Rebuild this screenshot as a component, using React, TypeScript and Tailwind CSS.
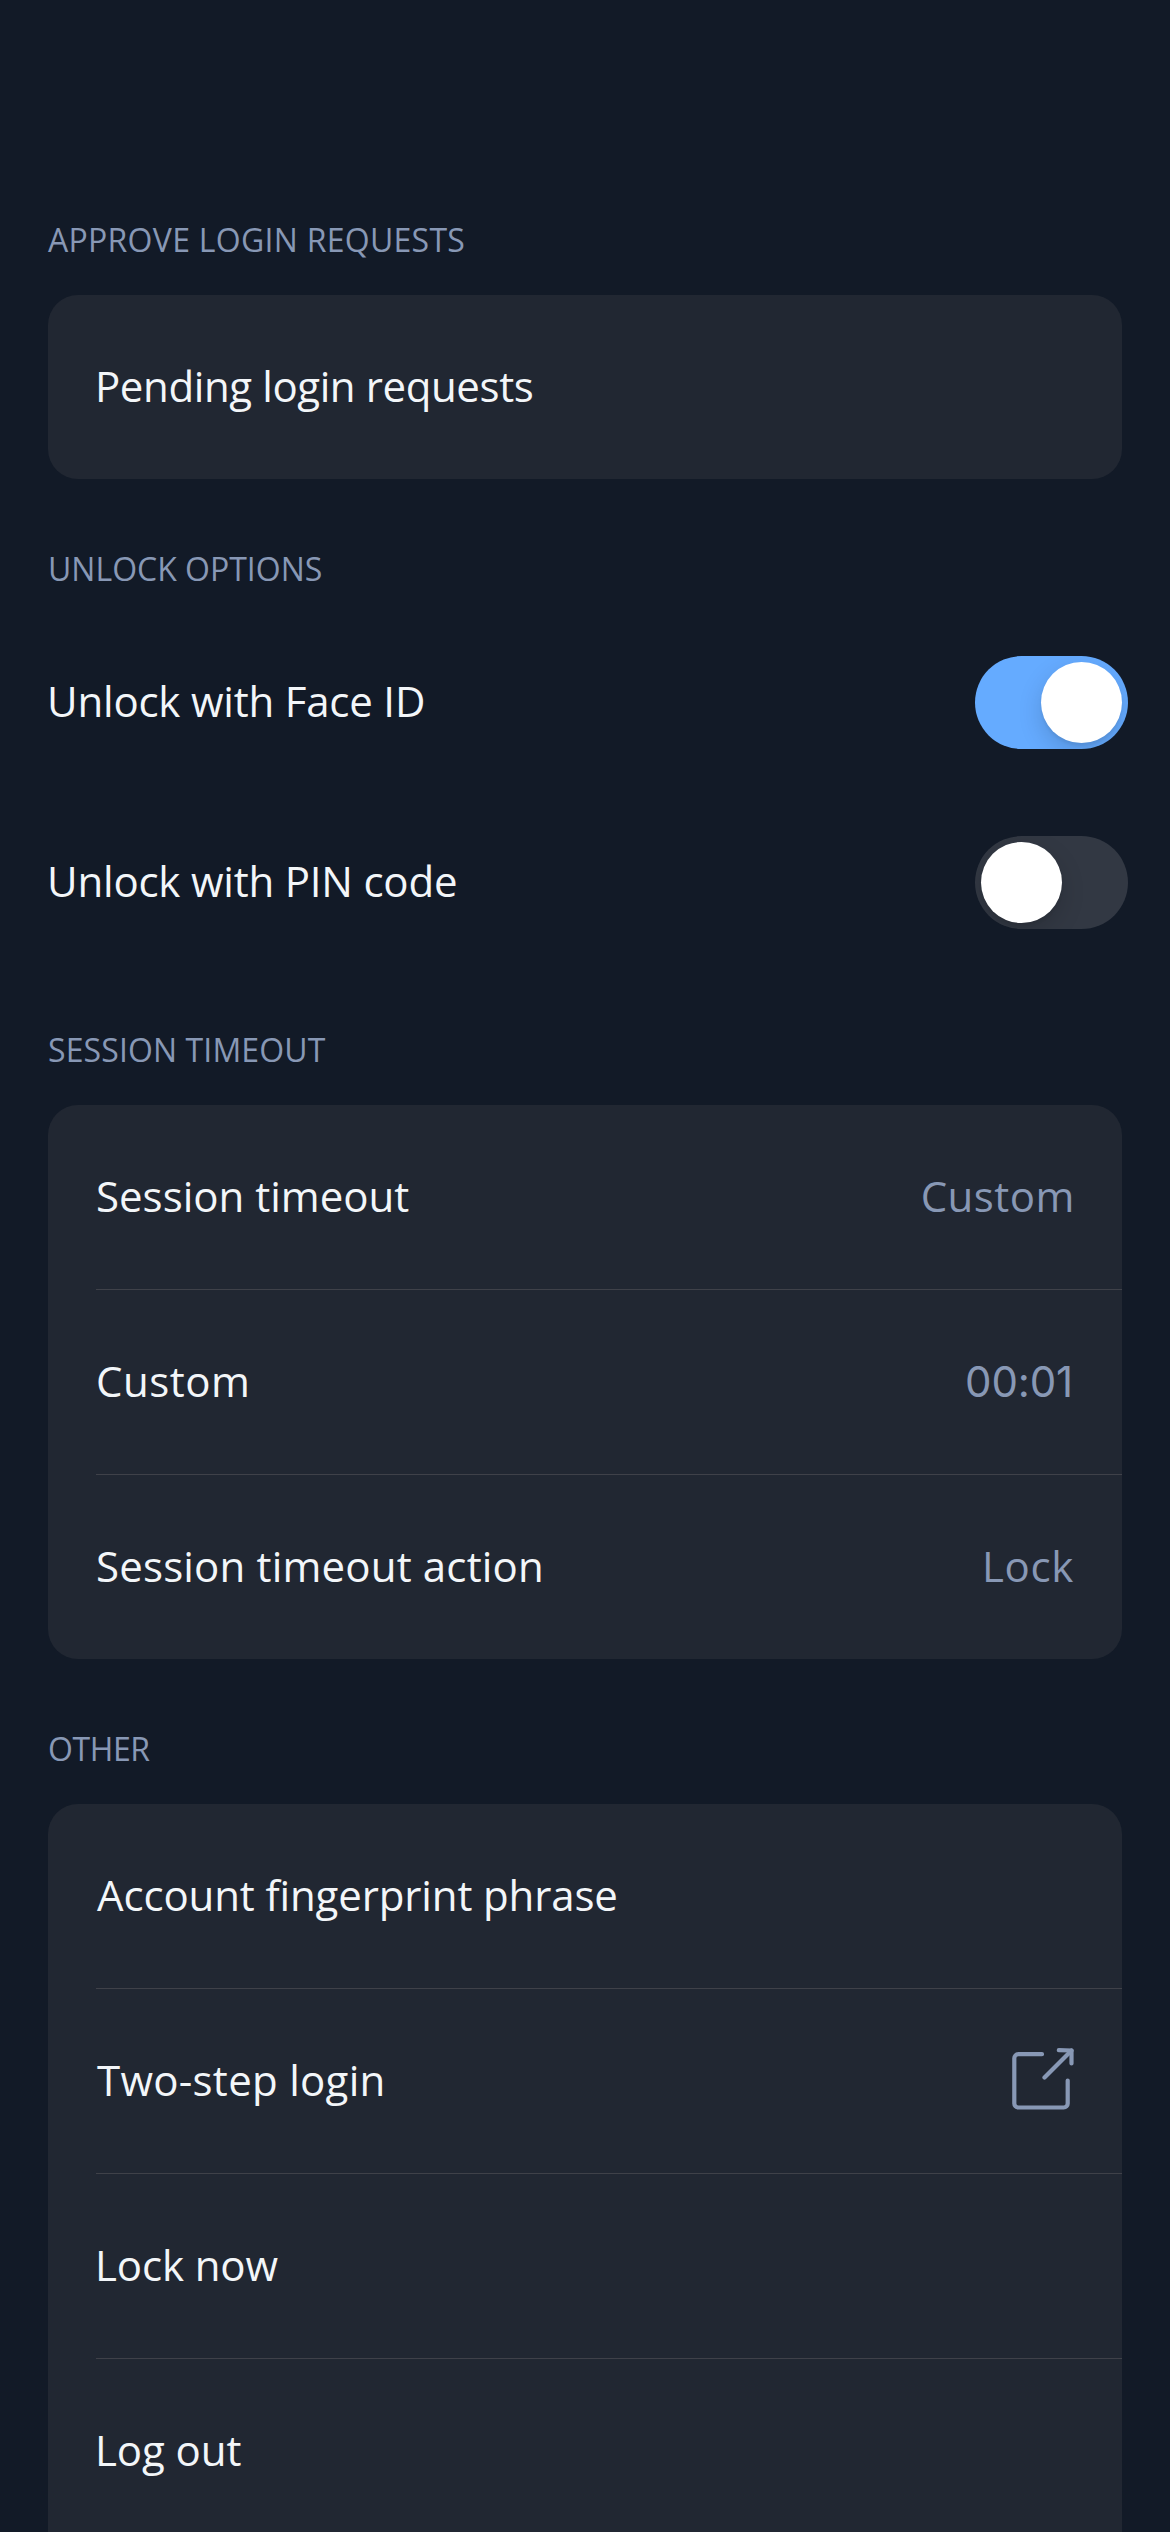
import React from 'react';
import clsx from 'clsx';

type RowData = {
  label: string;
  labelClass?: string;
  value?: string;
  valueClass?: string;
  external?: boolean;
};

const approveRows: RowData[] = [
  { label: 'Pending login requests', labelClass: 'tracking-[-0.4px] -ml-px' },
];

const sessionRows: RowData[] = [
  { label: 'Session timeout', value: 'Custom', valueClass: 'tracking-[0.5px] -mr-px' },
  { label: 'Custom', labelClass: 'tracking-[0.5px]', value: '00:01', valueClass: "font-['Inter'] tracking-[-0.15px] pt-[3px] mr-px" },
  { label: 'Session timeout action', labelClass: 'tracking-[0.17px]', value: 'Lock', valueClass: 'tracking-[0.66px]' },
];

const otherRows: RowData[] = [
  { label: 'Account fingerprint phrase', labelClass: 'tracking-[-0.13px] ml-px' },
  { label: 'Two-step login', labelClass: 'tracking-[0.28px] ml-px', external: true },
  { label: 'Lock now', labelClass: 'tracking-[-0.12px] -ml-px' },
  { label: 'Log out', labelClass: 'tracking-[-0.07px] -ml-px' },
];

function ExternalIcon() {
  return (
    <svg
      className="h-[68px] w-[63px]"
      viewBox="0 0 63 68"
      fill="none"
      stroke="#8898B5"
      strokeWidth="4.2"
      strokeLinecap="round"
      strokeLinejoin="round"
    >
      <path d="M31 7.2H7.3a4 4 0 0 0-4 4V56.5a4 4 0 0 0 4 4H52.7a4 4 0 0 0 4-4V33.5" />
      <path d="M33.5 30.5 60.5 3.5" />
      <path d="M47.8 3.2 60.5 3.5V16.5" />
    </svg>
  );
}

function Heading({ children, className }: { children: React.ReactNode; className?: string }) {
  return <h2 className={clsx('h-12 text-[32px] leading-[48px] text-[#8898B5]', className)}>{children}</h2>;
}

function Card({ rows, className }: { rows: RowData[]; className?: string }) {
  return (
    <div className={clsx('mt-[31px] mr-12 shrink-0 overflow-hidden bg-[#212732] pl-12', className)}>
      {rows.map((row, i) => (
        <div
          key={row.label}
          className={clsx(
            'flex items-center justify-between pr-12',
            i > 0 ? 'h-[185px] border-t border-[#3F4149]' : 'h-[184px]',
          )}
        >
          <span className={clsx('pb-[3px]', row.labelClass)}>{row.label}</span>
          {row.value && <span className={clsx('pb-[3px] text-[#8898B5]', row.valueClass)}>{row.value}</span>}
          {row.external && <ExternalIcon />}
        </div>
      ))}
    </div>
  );
}

function Toggle({ on }: { on: boolean }) {
  return (
    <div
      role="switch"
      aria-checked={on}
      className={clsx(
        'flex h-[93px] w-[153px] items-center overflow-hidden rounded-full p-1.5',
        on ? 'justify-end bg-[#65ABFF]' : 'bg-[#323843]',
      )}
    >
      <div className="size-[81px] rounded-full bg-white shadow-[0_9px_24px_rgba(0,0,0,0.15),0_3px_3px_rgba(0,0,0,0.06)]" />
    </div>
  );
}

function ToggleRow({ label, on, className }: { label: string; on: boolean; className?: string }) {
  return (
    <div className={clsx('mr-[42px] flex h-[93px] items-center justify-between', className)}>
      <span className="-ml-px pb-[3px] tracking-[-0.2px]">{label}</span>
      <Toggle on={on} />
    </div>
  );
}

export default function App() {
  return (
    <main className="flex h-[2532px] w-[1170px] flex-col overflow-hidden bg-[#121A27] pt-[216px] pl-12 font-['Open_Sans',sans-serif] text-[42px] leading-[58px] whitespace-nowrap text-[#F3F6F9]">
      <Heading className="tracking-[0.28px]">APPROVE LOGIN REQUESTS</Heading>
      <Card rows={approveRows} className="rounded-[30px]" />

      <Heading className="mt-[66px]">UNLOCK OPTIONS</Heading>
      <ToggleRow label="Unlock with Face ID" on className="mt-[63px]" />
      <ToggleRow label="Unlock with PIN code" on={false} className="mt-[87px]" />

      <Heading className="mt-[97px] tracking-[0.12px]">SESSION TIMEOUT</Heading>
      <Card rows={sessionRows} className="rounded-[30px]" />

      <Heading className="mt-[66px] tracking-[-0.4px]">OTHER</Heading>
      <Card rows={otherRows} className="h-[728px] rounded-t-[30px]" />
    </main>
  );
}
